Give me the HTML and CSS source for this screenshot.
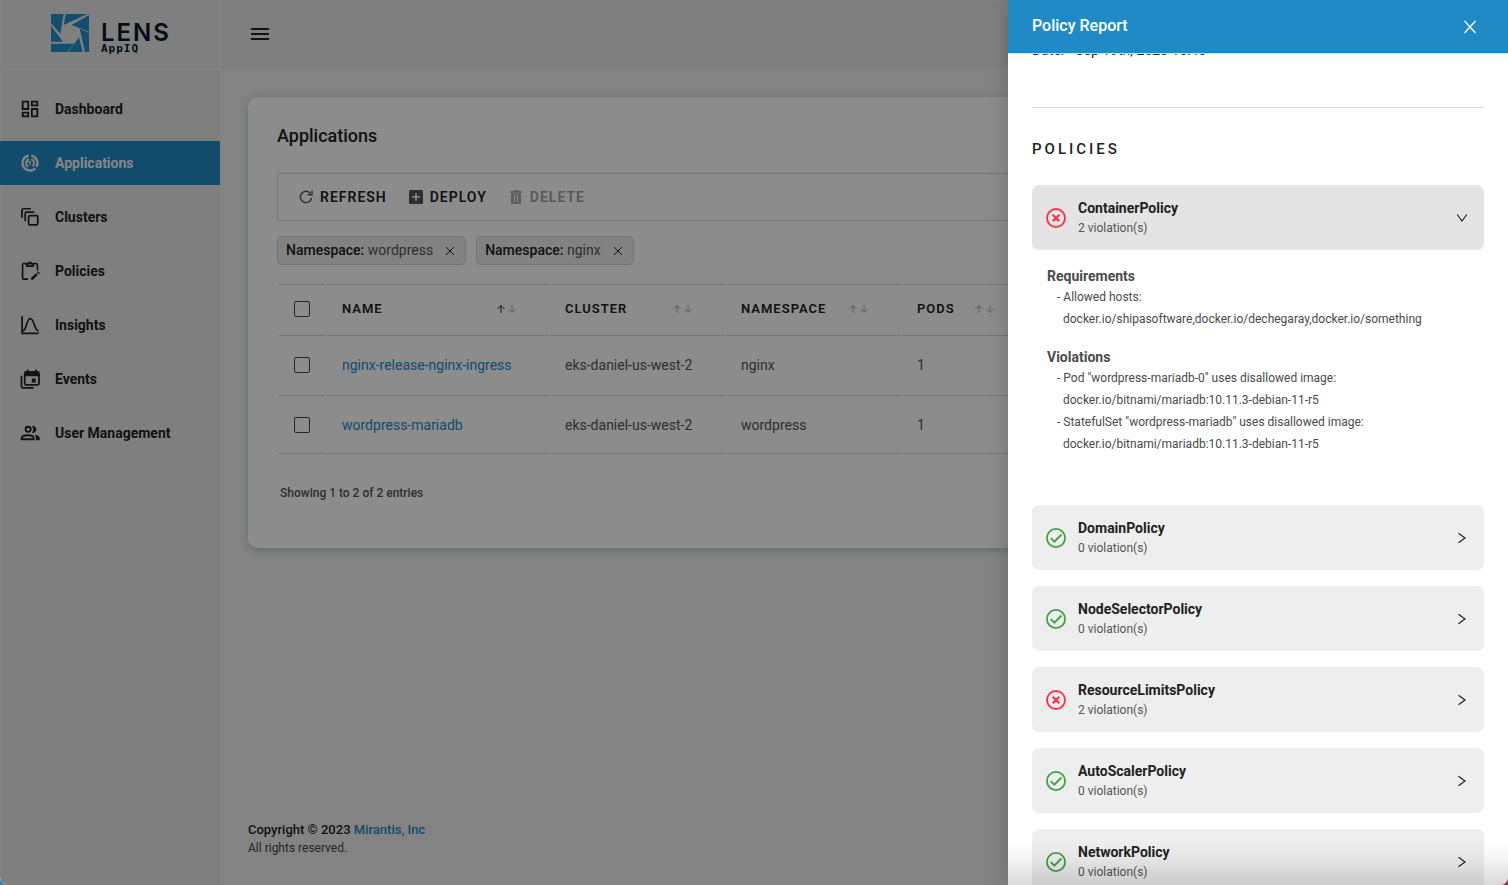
FILE: index.html
```html
<!DOCTYPE html>
<html lang="en">
<head>
<meta charset="utf-8">
<title>Lens AppIQ - Applications</title>
<link rel="stylesheet" href="styles.css">
</head>
<body>
<svg class="sprite" aria-hidden="true">
  <symbol id="up" viewBox="0 0 10 10"><path d="M5 9V1.500M1.500 5 5 1.500 8.500 5" fill="none" stroke="currentColor"/></symbol>
  <symbol id="down" viewBox="0 0 10 10"><path d="M5 1v7.500M1.500 5 5 8.500 8.500 5" fill="none" stroke="currentColor"/></symbol>
  <symbol id="cross" viewBox="0 0 10 10"><path d="m1 1 8 8M9 1 1 9" fill="none" stroke="currentColor"/></symbol>
  <symbol id="close" viewBox="0 0 14 14"><path d="m1.500 1 11 12M12.500 1l-11 12" fill="none" stroke="currentColor" stroke-width="1.300"/></symbol>
  <symbol id="pass" viewBox="0 0 20 20"><g fill="none" stroke="#3da144" stroke-width="1.800"><circle cx="10" cy="10" r="9.100"/><path d="m4.800 10.200 3.600 3.500 7-7.200"/></g></symbol>
  <symbol id="fail" viewBox="0 0 20 20"><g fill="none" stroke="#f9304e" stroke-width="1.900"><circle cx="10" cy="10" r="9"/><path d="m6.700 6.700 6.600 6.600M13.300 6.700l-6.600 6.600" stroke-width="2.200"/></g></symbol>
  <symbol id="chevron" viewBox="0 0 12 12"><path d="m2.500 1.200 6.500 4.800-6.500 4.800" fill="none" stroke="currentColor" stroke-width="1.200"/></symbol>
</svg>
<div class="app">
  <aside class="sidebar">
    <div class="brand">
      <svg class="brand-mark" viewBox="0 0 114 114" aria-hidden="true"><g fill="#258fca"><path d="M0 0h38L28 59 0 28zM44 0h65L38 33zM114 3v50L62 33zM86 44l28 12v58h-12zM84 70l11 44H52zM0 89h69l-20 25H0zM0 35l36 48H0z"/></g></svg>
      <div class="brand-text"><span class="brand-name">LENS</span><span class="brand-sub">AppIQ</span></div>
    </div>
    <nav class="nav">
      <a class="nav-item" href="#dashboard"><svg viewBox="0 0 24 24"><path fill="currentColor" d="M19 5v2h-4V5h4M9 5v6H5V5h4m10 8v6h-4v-6h4M9 17v2H5v-2h4M21 3h-8v6h8V3zM11 3H3v10h8V3zm10 8h-8v10h8V11zm-10 4H3v6h8v-6z"/></svg>Dashboard</a>
      <a class="nav-item active" href="#applications"><svg viewBox="0 0 24 24"><g fill="none" stroke="currentColor"><path stroke-width="2.500" d="M10.700 3.900A8.200 8.200 0 1 0 17.800 17.800M13.500 3.900a8.200 8.200 0 0 1 5.500 12.200"/><path stroke-width="2" d="M10.700 7.700A4.500 4.500 0 0 0 10.200 16M13.500 7.700a4.500 4.500 0 0 1 1.200 7.900"/><path stroke-width="1.500" d="M9 10.500h3v3.500"/></g></svg>Applications</a>
      <a class="nav-item" href="#clusters"><svg viewBox="0 0 24 24"><g fill="none" stroke="currentColor" stroke-width="1.900"><rect x="10.500" y="10.500" width="10" height="10" rx="1.500"/><path d="M6.800 16.500V8.300q0-1.500 1.500-1.500h8.400M3.200 12.800V4.500Q3.200 3 4.700 3H13"/></g></svg>Clusters</a>
      <a class="nav-item" href="#policies"><svg viewBox="0 0 24 24"><g fill="none" stroke="currentColor" stroke-width="1.800"><path d="M10 20.800H5.300Q3.900 20.800 3.900 19.400V5.300Q3.900 3.900 5.300 3.900H18.700Q20.100 3.900 20.100 5.300V11.500M8.500 4v2.600h7V4"/><path d="M10.200 3.700a1.900 1.900 0 0 1 3.600 0"/><path stroke-width="2.800" d="m13.500 21.200 6-5.800m1-1 1.300-1.200"/></g></svg>Policies</a>
      <a class="nav-item" href="#insights"><svg viewBox="0 0 24 24"><path fill="none" stroke="currentColor" stroke-width="1.900" d="M3.400 2.500v18.600h18M3.500 18.500C9 18.500 7.500 5 12.300 5s4 13.500 9.200 13.500"/></svg>Insights</a>
      <a class="nav-item" href="#events"><svg viewBox="0 0 24 24"><g fill="none" stroke="currentColor" stroke-width="1.900"><path d="M2.700 8.500V20q0 1.700 1.500 1.700H16"/><rect x="6.300" y="4.300" width="15.500" height="14" rx="1.500"/><path d="M9.500 1.500v4m9-4v4"/></g><path fill="currentColor" d="M6.500 4.500h15V9h-15zM14 11.500h4.200v4.200H14z"/></svg>Events</a>
      <a class="nav-item" href="#users"><svg viewBox="0 0 24 24"><g fill="none" stroke="currentColor" stroke-width="2"><circle cx="10" cy="8" r="2.800"/><path d="M3 18.800v-1.400c0-3.900 13-3.900 13 0v1.400z"/></g><path fill="currentColor" d="M14 4.400a3.800 3.800 0 1 1 0 7.300c2-2 2-5.300 0-7.300zM17 13.700c3 .5 5.500 1.700 5.500 3.700v2.400h-4v-2.400c0-1.500-.5-2.700-1.500-3.700z"/></svg>User Management</a>
    </nav>
  </aside>
  <div class="page">
    <header class="topbar"><button class="menu" aria-label="Toggle menu"><span></span><span></span><span></span></button></header>
    <main class="content">
      <section class="card">
        <h1>Applications</h1>
        <div class="toolbar">
          <button><svg viewBox="0 0 16 16"><g fill="none" stroke="currentColor" stroke-width="1.400"><path d="M13.600 9A5.700 5.700 0 1 1 12.400 4.300"/><path d="M14 1.500v4.300H9.700"/></g></svg>REFRESH</button>
          <button><svg viewBox="0 0 16 16"><rect x="1" y="1" width="14" height="14" rx="1.500" fill="currentColor"/><path d="M8 4.200v7.600M4.200 8h7.600" stroke="#fff" stroke-width="1.600"/></svg>DEPLOY</button>
          <button disabled><svg viewBox="0 0 16 16"><path fill="currentColor" d="M2 2h3.700L7 1h2.500l1.200 1H14v1.800H2zM3 4.200h10V15H3z"/><path d="M6.500 6v7m3-7v7" stroke="#fff" stroke-width="1"/></svg>DELETE</button>
        </div>
        <div class="chips">
          <span class="chip"><span><b>Namespace:</b> wordpress</span><button aria-label="Remove wordpress"><svg><use href="#cross"/></svg></button></span>
          <span class="chip"><span><b>Namespace:</b> nginx</span><button aria-label="Remove nginx"><svg><use href="#cross"/></svg></button></span>
        </div>
        <table class="apps">
          <colgroup><col class="c-check"><col class="c-name"><col class="c-mid"><col class="c-mid"><col class="c-pods"><col></colgroup>
          <thead><tr>
            <th><input type="checkbox" aria-label="Select all"></th>
            <th><div class="head">NAME<span class="sort asc"><svg><use href="#up"/></svg><svg><use href="#down"/></svg></span></div></th>
            <th><div class="head">CLUSTER<span class="sort"><svg><use href="#up"/></svg><svg><use href="#down"/></svg></span></div></th>
            <th><div class="head">NAMESPACE<span class="sort"><svg><use href="#up"/></svg><svg><use href="#down"/></svg></span></div></th>
            <th><div class="head">PODS<span class="sort"><svg><use href="#up"/></svg><svg><use href="#down"/></svg></span></div></th>
            <th></th>
          </tr></thead>
          <tbody>
            <tr><td><input type="checkbox" aria-label="Select nginx-release-nginx-ingress"></td><td><a href="#nginx">nginx-release-nginx-ingress</a></td><td>eks-daniel-us-west-2</td><td>nginx</td><td>1</td><td></td></tr>
            <tr><td><input type="checkbox" aria-label="Select wordpress-mariadb"></td><td><a href="#wordpress">wordpress-mariadb</a></td><td>eks-daniel-us-west-2</td><td>wordpress</td><td>1</td><td></td></tr>
          </tbody>
        </table>
        <p class="entries">Showing 1 to 2 of 2 entries</p>
      </section>
      <footer class="footer">
        <p class="copyright">Copyright © 2023 <a href="#mirantis">Mirantis, Inc</a></p>
        <p class="rights">All rights reserved.</p>
      </footer>
    </main>
  </div>
  <div class="backdrop"></div>
  <aside class="drawer" aria-label="Policy Report">
    <header class="drawer-head"><h2>Policy Report</h2><button aria-label="Close"><svg><use href="#close"/></svg></button></header>
    <div class="drawer-body">
      <p class="date"><span>Date:</span><span>Sep 19th, 2023 16:43</span></p>
      <h3>POLICIES</h3>
      <div class="policies">
        <div>
          <button class="policy open" aria-expanded="true"><svg class="status"><use href="#fail"/></svg><span class="info"><span class="name">ContainerPolicy</span><span class="count">2 violation(s)</span></span><svg class="arrow"><use href="#chevron"/></svg></button>
          <div class="details">
            <h4>Requirements</h4>
            <ul><li>Allowed hosts:<br>docker.io/shipasoftware,docker.io/dechegaray,docker.io/something</li></ul>
            <h4>Violations</h4>
            <ul class="violations">
              <li>Pod "wordpress-mariadb-0" uses disallowed image:<br>docker.io/bitnami/mariadb:10.11.3-debian-11-r5</li>
              <li>StatefulSet "wordpress-mariadb" uses disallowed image:<br>docker.io/bitnami/mariadb:10.11.3-debian-11-r5</li>
            </ul>
          </div>
        </div>
        <button class="policy" aria-expanded="false"><svg class="status"><use href="#pass"/></svg><span class="info"><span class="name">DomainPolicy</span><span class="count">0 violation(s)</span></span><svg class="arrow"><use href="#chevron"/></svg></button>
        <button class="policy" aria-expanded="false"><svg class="status"><use href="#pass"/></svg><span class="info"><span class="name">NodeSelectorPolicy</span><span class="count">0 violation(s)</span></span><svg class="arrow"><use href="#chevron"/></svg></button>
        <button class="policy" aria-expanded="false"><svg class="status"><use href="#fail"/></svg><span class="info"><span class="name">ResourceLimitsPolicy</span><span class="count">2 violation(s)</span></span><svg class="arrow"><use href="#chevron"/></svg></button>
        <button class="policy" aria-expanded="false"><svg class="status"><use href="#pass"/></svg><span class="info"><span class="name">AutoScalerPolicy</span><span class="count">0 violation(s)</span></span><svg class="arrow"><use href="#chevron"/></svg></button>
        <button class="policy" aria-expanded="false"><svg class="status"><use href="#pass"/></svg><span class="info"><span class="name">NetworkPolicy</span><span class="count">0 violation(s)</span></span><svg class="arrow"><use href="#chevron"/></svg></button>
      </div>
    </div>
  </aside>
</div>
</body>
</html>
```
FILE: styles.css
```css
* { box-sizing: border-box; }
body {
  margin: 0;
  font-family: Roboto, sans-serif;
  font-size: 14px;
  color: #212121;
  background: linear-gradient(to right, #1789c9 50%, #b5301f 50%);
}
h1, h2, h3, h4, p, ul { margin: 0; padding: 0; }
button { font: inherit; color: inherit; border: 0; padding: 0; background: none; cursor: pointer; }
a { color: #1f8ac5; text-decoration: none; }
svg { display: block; flex: none; }
.sprite { position: absolute; width: 0; height: 0; }

.app {
  position: relative;
  display: flex;
  height: 100vh;
  overflow: hidden;
  border-radius: 0 0 8px 8px;
  background: #efefef;
}

/* Sidebar */
.sidebar { width: 220px; flex: none; background: #e8e8e8; border-left: 1px solid #f0f0f0; }
.brand {
  display: flex;
  gap: 12px;
  height: 69px;
  padding: 14px 0 0 50px;
  border-bottom: 1px solid #f2f2f2;
}
.brand-mark { width: 38px; height: 38px; }
.brand-text { display: flex; flex-direction: column; padding-top: 7px; color: #04172a; }
.brand-name { font: 600 24px/24px Inter, sans-serif; letter-spacing: 2px; }
.brand-sub { font: 700 11px/8px "DejaVu Sans Mono", monospace; letter-spacing: 1px; }
.nav { display: flex; flex-direction: column; gap: 10px; padding-top: 18px; }
.nav-item {
  display: flex;
  align-items: center;
  gap: 14px;
  height: 44px;
  margin-left: -1px;
  padding-left: 19px;
  font-weight: 700;
  color: #212121;
}
.nav-item svg { width: 22px; height: 22px; }
.nav-item.active { background: #1f8ac5; color: #f2f2f2; }

/* Page */
.page { flex: 1; min-width: 0; display: flex; flex-direction: column; }
.topbar { height: 68px; display: flex; align-items: center; padding-left: 30px; background: #e8e8e8; border-left: 1px solid #f2f2f2; }
.menu { display: grid; gap: 3px; width: 18px; }
.menu span { height: 2px; background: #212121; }
.content { flex: 1; display: flex; flex-direction: column; justify-content: space-between; padding: 29px 28px 27px; }
.card {
  padding: 29px;
  height: 451px;
  border-radius: 10px;
  background: #fff;
  box-shadow: 0 2px 10px rgba(30, 50, 70, .25);
}
.card h1 { font-size: 18px; line-height: 20px; font-weight: 500; }
.toolbar {
  display: flex;
  align-items: center;
  gap: 21px;
  height: 48px;
  margin-top: 27px;
  padding-left: 20px;
  border: 1px solid #d4d4d4;
  border-radius: 2px;
}
.toolbar button { display: flex; align-items: center; gap: 6px; font-weight: 600; letter-spacing: 1px; }
.toolbar button:disabled { color: #9e9e9e; }
.toolbar svg { width: 16px; height: 16px; color: #555; }
.toolbar button:disabled svg { color: #adadad; }
.chips { display: flex; gap: 10px; margin-top: 15px; }
.chip {
  display: flex;
  align-items: center;
  gap: 12px;
  height: 29px;
  padding: 0 10px 1px 8px;
  border: 1px solid #d2d2d2;
  border-radius: 5px;
  background: #ededed;
  line-height: 16px;
  color: #555;
}
.chip b { font-weight: 500; color: #212121; }
.chip svg { width: 10px; height: 10px; margin-top: 1px; color: #212121; }

.apps { width: 100%; margin-top: 19px; table-layout: fixed; border-spacing: 2px 0; }
.c-check { width: 46px; }
.c-name { width: 221px; }
.c-mid { width: 174px; }
.c-pods { width: 124px; }
.apps th, .apps td { padding: 0 0 0 15px; text-align: left; border-bottom: 1px solid #d6d6d6; }
.apps th { height: 52px; padding-bottom: 3px; font-size: 13px; font-weight: 600; border-top: 1px solid #d6d6d6; letter-spacing: 1px; }
.apps td { height: 60px; padding-bottom: 1px; color: #555; }
.apps tr:last-child td { height: 58px; padding-bottom: 0; }
.head { display: flex; justify-content: space-between; align-items: center; padding-right: 31px; }
.sort { display: flex; gap: 1px; color: #aaa; }
.sort svg { width: 10px; height: 10px; }
.sort.asc svg:first-child { color: #212121; }
input[type="checkbox"] {
  display: block;
  appearance: none;
  width: 16px;
  height: 16px;
  margin: 0;
  border: 1px solid #444;
  border-radius: 2px;
}
.entries { margin: 32px 3px 0; font-size: 12px; line-height: 14px; font-weight: 500; color: #555; }
.footer { line-height: 19px; }
.copyright { font-size: 13px; font-weight: 500; }
.rights { font-size: 12px; color: #444; }

/* Drawer */
.backdrop { position: absolute; inset: 0; background: rgba(0, 0, 0, .45); }
.drawer {
  position: absolute;
  inset: 0 0 0 auto;
  width: 500px;
  display: flex;
  flex-direction: column;
  background: #fff;
  box-shadow: -6px 0 16px rgba(0, 0, 0, .12);
}
.drawer::after {
  content: "";
  position: absolute;
  inset: auto 0 0;
  height: 44px;
  background: linear-gradient(transparent, rgba(0, 0, 0, .04) 40%, rgba(0, 0, 0, .15));
  pointer-events: none;
}
.drawer-head {
  display: flex;
  flex: none;
  justify-content: space-between;
  align-items: center;
  height: 54px;
  padding: 0 31px 2px 24px;
  background: #1f8ac5;
  border-bottom: 1px solid #d5e3ec;
  color: #fff;
}
.drawer-head h2 { font-size: 16px; font-weight: 500; }
.drawer-head svg { width: 14px; height: 14px; margin-top: 2px; }
.drawer-body { flex: 1; min-height: 0; overflow: hidden; padding: 0 24px; }
.date { display: flex; gap: 11px; margin-top: -12px; padding-bottom: 49px; line-height: 16px; border-bottom: 1px solid #ddd; }
.drawer-body h3 { margin: 32px 0 27px; font-size: 15px; line-height: 18px; font-weight: 500; letter-spacing: 3px; }
.policies { display: grid; gap: 16px; }
.policy {
  display: flex;
  align-items: center;
  width: 100%;
  height: 65px;
  padding: 0 16px 0 14px;
  border-radius: 7px;
  background: #eee;
  text-align: left;
}
.policy.open { background: #e4e4e4; }
.status { width: 20px; height: 20px; margin-right: 12px; }
.info { display: flex; flex-direction: column; flex: 1; line-height: 20px; }
.name { font-weight: 700; }
.count { font-size: 12px; color: #555; }
.arrow { width: 12px; height: 12px; }
.open .arrow { transform: rotate(90deg); }
.details { padding: 16px 15px 34px; color: #4a4a4a; }
.details h4 { font-size: 14px; line-height: 20px; font-weight: 700; }
.details ul { list-style: none; margin-left: 10px; font-size: 12px; line-height: 22px; }
.details h4 + ul { margin-bottom: 17px; }
.details .violations:last-child { margin-bottom: 0; }
.details li { padding-left: 6px; text-indent: -6px; }
.details li::before { content: "- "; }
```
